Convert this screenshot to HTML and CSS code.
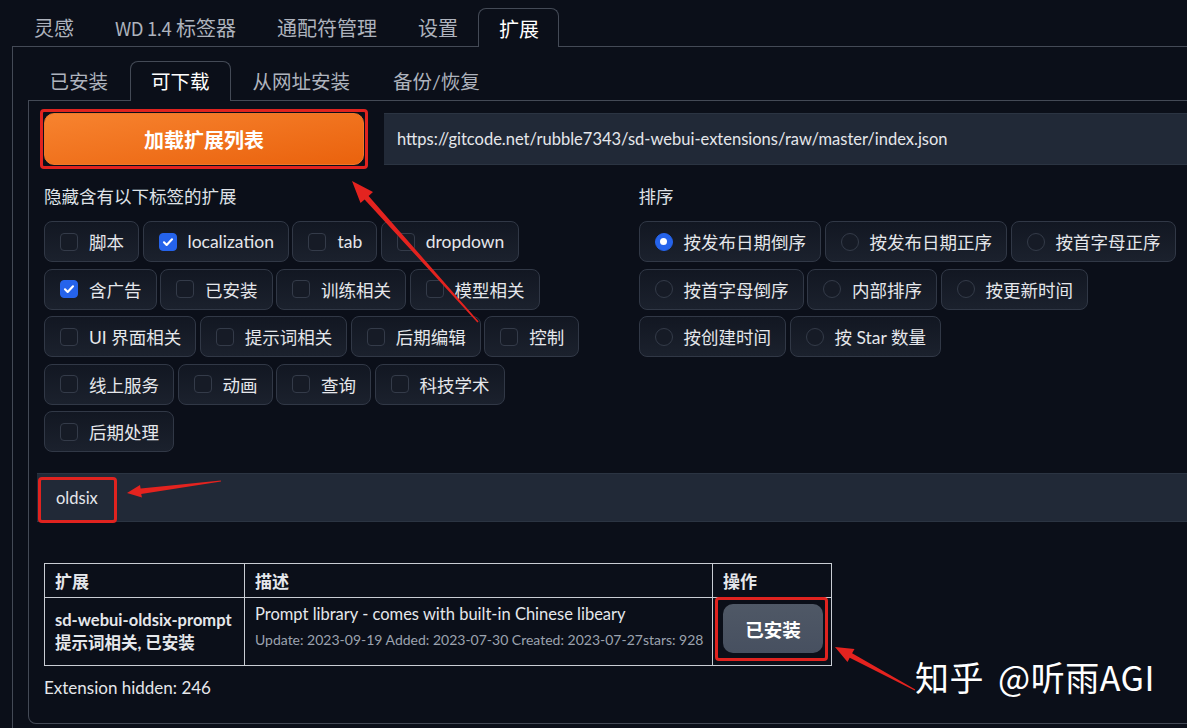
FILE: index.html
```html
<!DOCTYPE html>
<html lang="zh-CN">
<head>
    <meta charset="UTF-8">
    <title>扩展 - 可下载</title>
    <link rel="stylesheet" href="styles.css">
</head>
<body>
    <div class="app">
        <!-- Abas principais -->
        <div class="tab-nav top-nav">
            <button class="tab">灵感</button>
            <button class="tab"><span class="latin">WD 1.4</span> 标签器</button>
            <button class="tab">通配符管理</button>
            <button class="tab">设置</button>
            <button class="tab selected">扩展</button>
        </div>

        <div class="tab-panel outer-panel">
            <div class="tab-nav sub-nav">
                <button class="tab">已安装</button>
                <button class="tab selected">可下载</button>
                <button class="tab">从网址安装</button>
                <button class="tab">备份/恢复</button>
            </div>

            <div class="tab-panel inner-panel">
                <div class="load-row">
                    <div class="marked">
                        <button class="btn-primary">加载扩展列表</button>
                        <span class="mark mark-load"></span>
                    </div>
                    <div class="textbox url-box">https://gitcode.net/rubble7343/sd-webui-extensions/raw/master/index.json</div>
                </div>

                <div class="filter-row">
                    <div class="col">
                        <div class="group-label">隐藏含有以下标签的扩展</div>
                        <div class="choices">
                            <label class="choice"><span class="box"></span>脚本</label>
                            <label class="choice"><span class="box checked"><svg viewBox="0 0 18 18"><path d="M4.5 9.3l3 3 6-6.3"/></svg></span>localization</label>
                            <label class="choice"><span class="box"></span>tab</label>
                            <label class="choice"><span class="box"></span>dropdown</label>
                            <label class="choice"><span class="box checked"><svg viewBox="0 0 18 18"><path d="M4.5 9.3l3 3 6-6.3"/></svg></span>含广告</label>
                            <label class="choice"><span class="box"></span>已安装</label>
                            <label class="choice"><span class="box"></span>训练相关</label>
                            <label class="choice"><span class="box"></span>模型相关</label>
                            <label class="choice"><span class="box"></span>UI 界面相关</label>
                            <label class="choice"><span class="box"></span>提示词相关</label>
                            <label class="choice"><span class="box"></span>后期编辑</label>
                            <label class="choice"><span class="box"></span>控制</label>
                            <label class="choice"><span class="box"></span>线上服务</label>
                            <label class="choice"><span class="box"></span>动画</label>
                            <label class="choice"><span class="box"></span>查询</label>
                            <label class="choice"><span class="box"></span>科技学术</label>
                            <label class="choice"><span class="box"></span>后期处理</label>
                        </div>
                    </div>
                    <div class="col">
                        <div class="group-label">排序</div>
                        <div class="choices">
                            <label class="choice"><span class="radio checked"></span>按发布日期倒序</label>
                            <label class="choice"><span class="radio"></span>按发布日期正序</label>
                            <label class="choice"><span class="radio"></span>按首字母正序</label>
                            <label class="choice"><span class="radio"></span>按首字母倒序</label>
                            <label class="choice"><span class="radio"></span>内部排序</label>
                            <label class="choice"><span class="radio"></span>按更新时间</label>
                            <label class="choice"><span class="radio"></span>按创建时间</label>
                            <label class="choice"><span class="radio"></span>按 Star 数量</label>
                        </div>
                    </div>
                </div>

                <div class="textbox search-box">oldsix<span class="mark mark-search"></span></div>

                <table class="ext-table">
                    <thead>
                        <tr><th class="c-name">扩展</th><th class="c-desc">描述</th><th class="c-act">操作</th></tr>
                    </thead>
                    <tbody>
                        <tr>
                            <td class="ext-name">sd-webui-oldsix-prompt<br>提示词相关, 已安装</td>
                            <td class="ext-desc">
                                <div class="desc">Prompt library - comes with built-in Chinese libeary</div>
                                <div class="meta">Update: 2023-09-19 Added: 2023-07-30 Created: 2023-07-27stars: 928</div>
                            </td>
                            <td class="ext-action">
                                <div class="marked">
                                    <button class="btn-secondary">已安装</button>
                                    <span class="mark mark-installed"></span>
                                </div>
                            </td>
                        </tr>
                    </tbody>
                </table>

                <p class="hidden-count">Extension hidden: 246</p>
            </div>
        </div>
    </div>

    <!-- Setas de anotação -->
    <svg class="arrows" width="1187" height="728" viewBox="0 0 1187 728">
        <polygon points="352,181 373,192 368.6,196 478.6,321.6 477.4,322.4 364.6,199.4 360.5,203"/>
        <polygon points="127,493 142,497.5 141.2,494 221,481.6 220.9,480.6 140.6,488.5 140,485"/>
        <polygon points="835,647 854.5,649 852.1,653.3 915.3,689.5 914.7,690.5 849.7,657.7 847.5,662"/>
    </svg>

    <div class="watermark">知乎 @听雨AGI</div>
</body>
</html>
```

FILE: styles.css
```css
/* Tema escuro */
body { margin: 0; padding: 8px 0 0 12px; background: #0b0f19; color: #e5e7eb; font-family: Lato, "Noto Sans CJK SC", sans-serif; overflow: hidden; height: 720px; }
button { font: inherit; color: inherit; cursor: pointer; }
.app { width: 1232px; }

/* Abas */
.tab-nav { display: flex; align-items: flex-end; border-bottom: 1px solid #444a56; }
.tab { box-sizing: border-box; display: flex; align-items: center; padding: 0 20.5px; background: none; border: 1px solid transparent; border-bottom: 0; border-radius: 8px 8px 0 0; color: #aeb3bd; white-space: pre; }
.tab.selected { color: #fff; background: #0b0f19; border-color: #444a56; margin-bottom: -1px; }
.top-nav { padding-left: 1.5px; }
.top-nav .tab { height: 38px; padding: 0 19.5px; font-size: 20px; font-family: "Noto Sans CJK SC", sans-serif; }
.top-nav .tab.selected { height: 39px; }
.top-nav .latin { font-size: 18.5px; letter-spacing: -0.4px; }
.sub-nav .tab { height: 39px; font-size: 19.5px; padding-bottom: 2px; }
.sub-nav .tab.selected { height: 40px; }

.outer-panel { border-left: 1px solid #444a56; padding: 14px 15px 0 15px; height: 700px; }
.inner-panel { border: 1px solid #444a56; border-top: 0; border-radius: 0 0 8px 8px; padding: 12px 15px 24px; }

/* Linha de carregamento */
.load-row { display: flex; gap: 20px; height: 52px; }
.marked { position: relative; }
.btn-primary { width: 320px; height: 52px; border: 1px solid #f0772a; border-radius: 10px; background: linear-gradient(to bottom right, #f7832f, #ea620d); color: #fff; font-size: 20px; font-weight: 700; }
.textbox { box-sizing: border-box; display: flex; align-items: center; background: #212937; border-top: 1px solid #2b3442; border-bottom: 1px solid #2b3442; font-size: 16.5px; color: #e5e7eb; }
.url-box { flex: 1; padding-left: 13px; }

/* Anotações em vermelho */
.mark { position: absolute; border: 3px solid #e0231f; border-radius: 4px; pointer-events: none; }
.mark-load { top: -4px; left: -4px; right: -4px; bottom: -4px; }
.mark-search { left: 1px; top: 3px; width: 73px; height: 40px; }
.mark-installed { top: -7px; left: -8px; right: -7px; bottom: -8px; }

/* Filtros */
.filter-row { display: flex; gap: 20px; margin-top: 21px; align-items: flex-start; }
.col { flex: 1; min-width: 0; }
.group-label { font-size: 17.5px; line-height: 22px; color: #dfe2e7; }
.choices { display: flex; flex-wrap: wrap; gap: 6.5px 3.5px; margin-top: 13px; }
.choice { box-sizing: border-box; display: flex; align-items: center; height: 41px; padding: 0 14px 0 15px; border: 1px solid #313846; border-radius: 8px; background: linear-gradient(to top, #1b212d, #121722); font-size: 17.5px; white-space: nowrap; }
.box, .radio { box-sizing: border-box; width: 18px; height: 18px; margin-right: 11px; border: 1px solid #343b49; background: #161b26; flex: none; }
.box { border-radius: 4px; }
.box.checked { background: #2563eb; border-color: #2563eb; }
.box svg { display: block; width: 16px; height: 16px; fill: none; stroke: #fff; stroke-width: 2.4; stroke-linecap: round; stroke-linejoin: round; }
.radio { border-radius: 50%; }
.radio.checked { background: #2563eb; border-color: #2563eb; display: flex; align-items: center; justify-content: center; }
.radio.checked::after { content: ""; width: 7px; height: 7px; border-radius: 50%; background: #fff; }

.search-box { position: relative; margin: 21px 0 0 -7px; height: 49px; padding-left: 19px; }

/* Tabela de extensões */
.ext-table { margin-top: 41px; border-collapse: collapse; width: 788px; table-layout: fixed; }
.ext-table th, .ext-table td { border: 1px solid #c9cdd4; padding: 0 10px; text-align: left; }
.ext-table th { height: 33px; font-size: 17px; font-weight: 700; }
.ext-table tbody tr { height: 68px; }
.ext-table td { font-size: 16.5px; vertical-align: middle; }
.c-name { width: 179px; }
.c-desc { width: 447px; }
.ext-name { font-weight: 700; line-height: 23px; white-space: nowrap; }
.ext-table .ext-desc { vertical-align: top; padding-top: 4px; }
.ext-table .ext-action { vertical-align: top; padding-top: 6px; }
.desc { line-height: 25px; }
.meta { font-size: 14px; line-height: 25px; color: #9ca3af; white-space: nowrap; }
.btn-secondary { display: block; width: 100px; height: 49px; border: 0; border-radius: 10px; background: linear-gradient(to bottom, #4f5866, #475060); color: #fff; font-size: 18.5px; font-weight: 700; }
.hidden-count { margin: 11px 0 0; font-size: 17px; line-height: 22px; }

.arrows { position: absolute; top: 0; left: 0; pointer-events: none; fill: #e4231f; }
.watermark { position: absolute; left: 915px; top: 657px; font-size: 34px; line-height: 40px; letter-spacing: 0.5px; word-spacing: 6px; color: #fff; white-space: nowrap; font-family: "Noto Sans CJK SC", sans-serif; }
```
